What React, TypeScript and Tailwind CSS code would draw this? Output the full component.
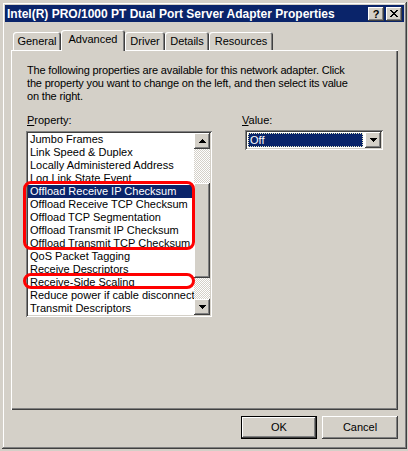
import React from "react";

const raised =
  "shadow-[inset_-1px_-1px_#404040,inset_1px_1px_#ffffff,inset_-2px_-2px_#808080,inset_2px_2px_#d4d0c8]";
const sunken =
  "shadow-[inset_1px_1px_#808080,inset_-1px_-1px_#ffffff,inset_2px_2px_#404040,inset_-2px_-2px_#d4d0c8]";

function UpArrow() {
  return (
    <svg width="7" height="4" viewBox="0 0 7 4" shapeRendering="crispEdges">
      <path d="M3 0h1v1h1v1h1v1h1v1H0V3h1V2h1V1h1z" fill="#000" />
    </svg>
  );
}
function DownArrow() {
  return (
    <svg width="7" height="4" viewBox="0 0 7 4" shapeRendering="crispEdges">
      <path d="M0 0h7v1H6v1H5v1H4v1H3V3H2V2H1V1H0z" fill="#000" />
    </svg>
  );
}

const items = [
  "Jumbo Frames",
  "Link Speed & Duplex",
  "Locally Administered Address",
  "Log Link State Event",
  "Offload Receive IP Checksum",
  "Offload Receive TCP Checksum",
  "Offload TCP Segmentation",
  "Offload Transmit IP Checksum",
  "Offload Transmit TCP Checksum",
  "QoS Packet Tagging",
  "Receive Descriptors",
  "Receive-Side Scaling",
  "Reduce power if cable disconnected",
  "Transmit Descriptors",
];

const tabs = [
  { label: "General", w: "w-[48px]" },
  { label: "Advanced", w: "w-[64px]", sel: true },
  { label: "Driver", w: "w-[40px]" },
  { label: "Details", w: "w-[44px]" },
  { label: "Resources", w: "w-[64px]" },
];

export default function App() {
  return (
    <div className="relative w-[408px] h-[451px] bg-[#d4d0c8] p-[2px] font-['Liberation_Sans',Arial,sans-serif] text-[11px] leading-[13px] text-black select-none">
      <div
        className={`w-[405px] h-[447px] p-[3px] flex flex-col bg-[#d4d0c8] shadow-[inset_-1px_-1px_#404040,inset_1px_1px_#d4d0c8,inset_-2px_-2px_#808080,inset_2px_2px_#ffffff]`}
      >
        {/* Title bar */}
        <div className="h-[17px] bg-[#0a246a] flex items-center pl-[2px] pr-[2px]">
          <span className="text-white font-bold text-[12px] leading-[14px] whitespace-nowrap">
            Intel(R) PRO/1000 PT Dual Port Server Adapter Properties
          </span>
          <div className="ml-auto flex gap-[2px]">
            <div
              className={`w-[16px] h-[14px] bg-[#d4d0c8] ${raised} flex items-center justify-center font-bold text-[11px] leading-[11px] pt-[1px]`}
            >
              ?
            </div>
            <div
              className={`w-[16px] h-[14px] bg-[#d4d0c8] ${raised} flex items-center justify-center`}
            >
              <svg width="8" height="7" viewBox="0 0 8 7" shapeRendering="crispEdges">
                <path
                  d="M0 0h2v1h1v1h2V1h1V0h2v1H7v1H6v1H5v1h1v1h1v1h1v1H6V6H5V5H3v1H2v1H0V6h1V5h1V4h1V3H2V2H1V1H0z"
                  fill="#000"
                />
              </svg>
            </div>
          </div>
        </div>

        {/* Content */}
        <div className="flex-1 flex flex-col px-[6px] pt-[8px]">
          {/* Tabs */}
          <div className="h-[20px] flex items-end pl-[2px]">
            {tabs.map((t) =>
              t.sel ? (
                <div
                  key={t.label}
                  className={`${t.w} h-[21px] -mb-[1px] relative z-10 bg-[#d4d0c8] rounded-t-[3px] shadow-[inset_1px_1px_#ffffff,inset_-1px_0_#404040,inset_-2px_0_#808080] flex justify-center pt-[3px]`}
                >
                  {t.label}
                </div>
              ) : (
                <div
                  key={t.label}
                  className={`${t.w} h-[18px] bg-[#d4d0c8] rounded-t-[3px] shadow-[inset_1px_1px_#ffffff,inset_-1px_0_#404040,inset_-2px_0_#808080] flex justify-center pt-[3px]`}
                >
                  {t.label}
                </div>
              )
            )}
          </div>

          {/* Panel */}
          <div className="h-[360px] bg-[#d4d0c8] shadow-[inset_1px_1px_#ffffff,inset_-1px_-1px_#404040,inset_-2px_-2px_#808080] pl-[15px] pt-[14px]">
            <p className="pl-[1px] w-[340px] tracking-[-0.17px]">
              The following properties are available for this network adapter. Click
              <br />
              the property you want to change on the left, and then select its value
              <br />
              on the right.
            </p>

            <div className="flex mt-[11px]">
              {/* Property column */}
              <div className="w-[186px] flex flex-col">
                <div className="pl-[1px]">
                  <span className="underline">P</span>roperty:
                </div>
                <div className={`mt-[4px] w-[186px] h-[186px] bg-white ${sunken} p-[2px] flex`}>
                  <div className="w-[166px] flex flex-col overflow-hidden">
                    {items.map((it, i) => (
                      <div
                        key={it}
                        className={`h-[13px] pl-[2px] whitespace-nowrap overflow-hidden ${
                          i === 4 ? "bg-[#0a246a] text-white" : ""
                        }`}
                      >
                        {it}
                      </div>
                    ))}
                  </div>
                  {/* Scrollbar */}
                  <div className="w-[16px] flex flex-col">
                    <div className={`h-[16px] bg-[#d4d0c8] ${raised} flex items-center justify-center pb-[1px]`}>
                      <UpArrow />
                    </div>
                    <div className="h-[34px] bg-[repeating-conic-gradient(#d4d0c8_0%_25%,#ffffff_0%_50%)] bg-[length:2px_2px]" />
                    <div className={`h-[95px] bg-[#d4d0c8] ${raised}`} />
                    <div className="h-[21px] bg-[repeating-conic-gradient(#d4d0c8_0%_25%,#ffffff_0%_50%)] bg-[length:2px_2px]" />
                    <div className={`h-[16px] bg-[#d4d0c8] ${raised} flex items-center justify-center`}>
                      <DownArrow />
                    </div>
                  </div>
                </div>
              </div>

              {/* Value column */}
              <div className="ml-[30px] flex flex-col">
                <div>
                  <span className="underline">V</span>alue:
                </div>
                <div className={`mt-[3px] ml-[3px] w-[138px] h-[20px] bg-white ${sunken} p-[2px] flex`}>
                  <div className="flex-1 p-[1px] pr-[2px]">
                    <div className="h-full bg-[#0a246a] text-white outline outline-1 outline-dotted outline-[#e8e8c0] -outline-offset-1 pl-[2px] leading-[14px]">
                      Off
                    </div>
                  </div>
                  <div className={`w-[16px] h-[16px] bg-[#d4d0c8] ${raised} flex items-center justify-center`}>
                    <DownArrow />
                  </div>
                </div>
              </div>
            </div>
          </div>

          {/* Buttons */}
          <div className="flex justify-end gap-[5px] mt-[6px]">
            <div className="w-[76px] h-[23px] border border-black">
              <div className={`w-full h-full bg-[#d4d0c8] ${raised} flex items-center justify-center`}>
                OK
              </div>
            </div>
            <div className={`w-[76px] h-[23px] bg-[#d4d0c8] ${raised} flex items-center justify-center`}>
              Cancel
            </div>
          </div>
        </div>
      </div>

      {/* Red annotations */}
      <div className="absolute left-[23px] top-[181px] w-[172px] h-[69px] border-[3px] border-[#ff0000] rounded-[8px] pointer-events-none" />
      <div className="absolute left-[23px] top-[273px] w-[172px] h-[16px] border-[3px] border-[#ff0000] rounded-[8px] pointer-events-none" />
    </div>
  );
}
